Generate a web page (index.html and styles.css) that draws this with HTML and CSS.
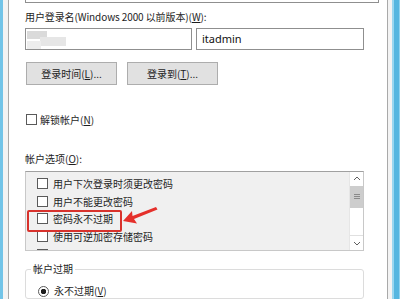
FILE: index.html
```html
<!doctype html>
<html lang="zh-CN">
<head>
    <meta charset="UTF-8">
    <meta name="viewport" content="width=device-width, initial-scale=1.0">
    <link rel="stylesheet" href="styles.css">
    <title>属性</title>
</head>
<body>
<div class="frame-left"></div>
<div class="frame-gap"></div>
<div class="panel">
    <div class="top-box"></div>
    <div class="label first">用户登录名(Windows 2000 以前版本)(<u>W</u>):</div>
    <div class="inputs">
        <div class="textbox domain">
            <span class="blur b1"></span><span class="blur b2"></span><span class="blur b3"></span>
        </div>
        <div class="textbox user">itadmin</div>
    </div>
    <div class="buttons">
        <button class="btn">登录时间(<u>L</u>)...</button>
        <button class="btn">登录到(<u>T</u>)...</button>
    </div>
    <label class="check unlock"><span class="box"></span><span>解锁帐户(<u>N</u>)</span></label>
    <div class="label options-label">帐户选项(<u>O</u>):</div>
    <div class="list">
        <div class="items">
            <div class="item"><span class="box"></span><span>用户下次登录时须更改密码</span></div>
            <div class="item"><span class="box"></span><span>用户不能更改密码</span></div>
            <div class="item"><span class="box"></span><span>密码永不过期</span></div>
            <div class="item"><span class="box"></span><span>使用可逆加密存储密码</span></div>
            <div class="item"><span class="box"></span><span>帐户已禁用</span></div>
        </div>
        <div class="scrollbar">
            <div class="arrow up">
                <svg width="8" height="5" viewBox="0 0 8 5"><path d="M1 4 L4 1 L7 4" fill="none" stroke="#606060" stroke-width="1"/></svg>
            </div>
            <div class="thumb"><span></span><span></span><span></span></div>
            <div class="track"></div>
            <div class="arrow down">
                <svg width="8" height="5" viewBox="0 0 8 5"><path d="M1 1 L4 4 L7 1" fill="none" stroke="#606060" stroke-width="1"/></svg>
            </div>
        </div>
        <div class="highlight"></div>
        <svg class="pointer" width="40" height="22" viewBox="0 0 40 22">
            <path d="M0 15 L9 5 L9.5 10 L33 1 L34.5 3.5 L11 13 L14 17.5 Z" fill="#e5302b"/>
        </svg>
    </div>
    <fieldset class="expiry">
        <legend>帐户过期</legend>
        <label class="radio"><span class="dot"></span><span>永不过期(<u>V</u>)</span></label>
    </fieldset>
</div>
<div class="frame-gap right"></div>
<div class="frame-right"></div>
</body>
</html>
```

FILE: styles.css
```css
body {
    display: flex;
    margin: 0;
    height: 299px;
    overflow: hidden;
    background: #f0f0f0;
    font-family: "Noto Sans CJK SC", "Noto Sans", sans-serif;
    font-size: 10px;
    color: #1e1e1e;
}

.frame-left {
    width: 3px;
    background: #72c4e8;
}

.frame-gap {
    width: 5px;
    background: #f3f3f3;
}

.frame-gap.right {
    width: 4px;
}

.frame-right {
    width: 8px;
    background: linear-gradient(to right, #9ad7f0 0, #9ad7f0 2px, #55b6e0 2px, #55b6e0 7px, #8fd1ee 7px);
}

.panel {
    flex: 1;
    background: #fff;
    border-left: 1px solid #a9a9a9;
    border-right: 1px solid #a9a9a9;
    padding-left: 16px;
    display: flex;
    flex-direction: column;
    align-items: flex-start;
}

.top-box {
    width: 352px;
    height: 2px;
    border: 1px solid #8f8f8f;
    border-top: none;
}

.label {
    line-height: 14px;
    white-space: nowrap;
}

.label.first {
    margin-top: 7px;
    letter-spacing: -0.1px;
}

.inputs {
    display: flex;
    gap: 4px;
    margin-top: 4px;
}

.textbox {
    height: 20px;
    border: 1px solid #8f8f8f;
    display: flex;
    align-items: center;
    box-sizing: content-box;
    font-size: 11px;
    font-family: "Noto Sans", sans-serif;
}

.domain {
    width: 165px;
    position: relative;
}

.user {
    width: 161px;
    padding-left: 5px;
    color: #111;
}

.blur {
    position: absolute;
    background: #e4e4e4;
}

.b1 { left: 1px; top: 2px; width: 20px; height: 8px; background: #dadada; }
.b2 { left: 14px; top: 8px; width: 26px; height: 9px; background: #e6e6e6; }
.b3 { left: 1px; top: 12px; width: 14px; height: 8px; background: #ededed; }

.buttons {
    display: flex;
    gap: 10px;
    margin-top: 12px;
    margin-left: 1px;
}

.btn {
    width: 91px;
    height: 23px;
    padding: 0;
    background: #e1e1e1;
    border: 1px solid #adadad;
    font: inherit;
    color: #1e1e1e;
}

.check, .item, .radio {
    display: flex;
    align-items: center;
    white-space: nowrap;
}

.box {
    width: 9px;
    height: 9px;
    border: 1px solid #5a5a5a;
    background: #fff;
    flex: none;
}

.unlock {
    margin-top: 28px;
    margin-left: 1px;
    line-height: 14px;
    gap: 3px;
}

.options-label {
    margin-top: 25px;
}

.list {
    position: relative;
    margin-top: 5px;
    width: 337px;
    height: 82px;
    border: 1px solid #c8c8c8;
    border-top-color: #a0a0a0;
    background: #f0f0f0;
    display: flex;
    overflow: hidden;
}

.items {
    flex: 1;
    padding-top: 3px;
    padding-left: 11px;
}

.item {
    height: 17.6px;
    gap: 5px;
}

.scrollbar {
    width: 13px;
    background: #fff;
    border-left: 1px solid #e6e6e6;
    display: flex;
    flex-direction: column;
}

.arrow {
    height: 14px;
    display: flex;
    align-items: center;
    justify-content: center;
}

.arrow.down {
    border-top: 1px solid #e0e0e0;
}

.thumb {
    height: 22px;
    background: #cdcdcd;
    display: flex;
    flex-direction: column;
    align-items: center;
    justify-content: center;
    gap: 1px;
}

.thumb span {
    width: 6px;
    height: 1px;
    background: #8a8a8a;
}

.track {
    flex: 1;
}

.highlight {
    position: absolute;
    left: 1px;
    top: 38px;
    width: 91px;
    height: 18px;
    border: 2px solid #d8322c;
    border-radius: 2px;
}

.pointer {
    position: absolute;
    left: 97px;
    top: 34px;
}

.expiry {
    margin: 11px 0 0;
    padding: 8px 0 0 5px;
    width: 332px;
    border: 1px solid #dcdcdc;
    border-radius: 3px;
}

.expiry legend {
    padding: 0 2px;
    margin-left: 0;
    line-height: 14px;
}

.radio {
    gap: 5px;
    line-height: 14px;
    margin-left: 7px;
}

.dot {
    width: 9px;
    height: 9px;
    border: 1px solid #5a5a5a;
    border-radius: 50%;
    background: radial-gradient(circle, #1e1e1e 0, #1e1e1e 2.5px, #fff 3px);
}
```
